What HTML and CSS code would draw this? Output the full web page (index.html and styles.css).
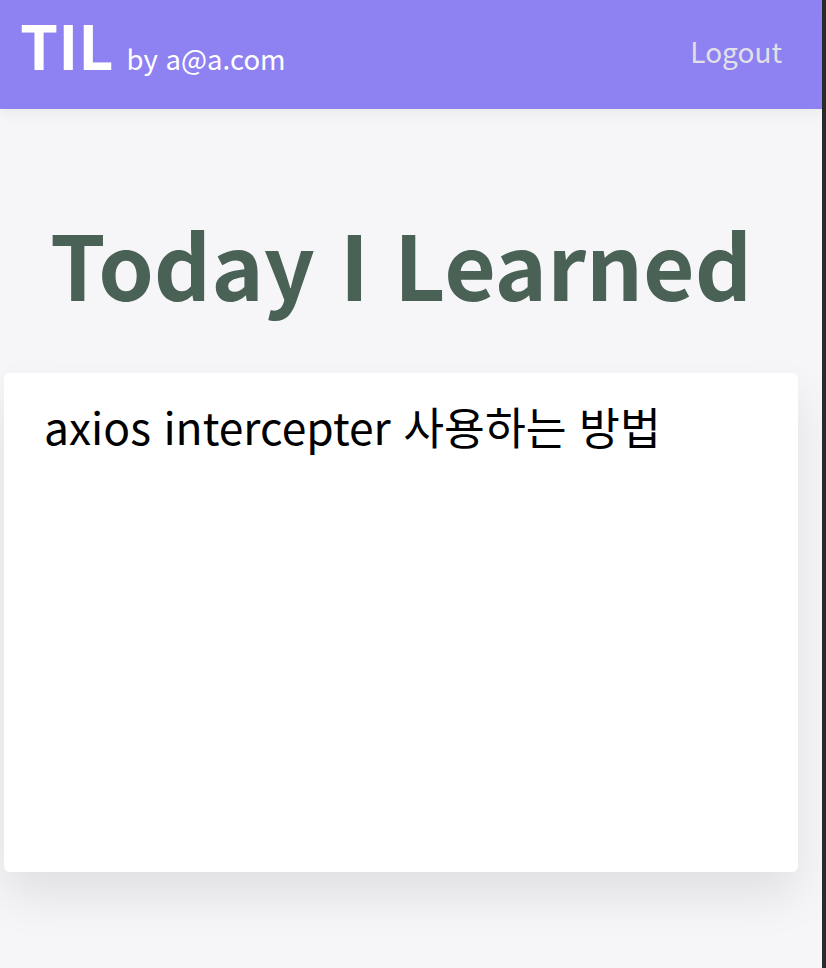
FILE: index.html
```html
<!DOCTYPE html>
<html lang="ko">
<head>
<meta charset="utf-8">
<title>TIL</title>
<link rel="stylesheet" href="styles.css">
</head>
<body>
<div class="app">
  <header class="header">
    <div class="brand">
      <span class="logo">TIL</span>
      <span class="user">by a@a.com</span>
    </div>
    <a class="logout" href="#">Logout</a>
  </header>
  <main class="main">
    <h1 class="title">Today I Learned</h1>
    <ul class="list">
      <li class="card">
        <div class="card-title">axios intercepter 사용하는 방법</div>
      </li>
    </ul>
  </main>
</div>
<div class="edge"></div>
</body>
</html>
```
FILE: styles.css
```css
html, body {
  margin: 0;
  padding: 0;
  height: 100%;
}
body {
  display: flex;
  background: #2a2a2c;
  font-family: "Noto Sans CJK KR", "Noto Sans", sans-serif;
  overflow: hidden;
}
.app {
  width: 822px;
  flex: none;
  background: #f6f6f9;
  min-height: 968px;
}
.edge {
  flex: 1;
  background: #2a2a2c;
}
.header {
  position: relative;
  z-index: 1;
  height: 109px;
  background: #8e82f3;
  display: flex;
  align-items: flex-start;
  justify-content: space-between;
  padding: 13px 40px 0 20px;
  box-sizing: border-box;
  box-shadow: 0 4px 14px rgba(0, 0, 0, 0.06);
}
.brand {
  display: flex;
  align-items: baseline;
  gap: 13px;
  color: #fff;
  line-height: 1;
}
.logo {
  font-size: 61px;
  font-weight: 700;
}
.user {
  font-size: 27.5px;
}
.logout {
  margin-top: 24px;
  color: #e0e0e6;
  text-decoration: none;
  font-size: 28px;
  line-height: 1;
}
.main {
  padding: 0 24px 0 4px;
}
.title {
  margin: 0 0 66px;
  padding-top: 109px;
  text-align: center;
  font-size: 89px;
  font-weight: 700;
  color: #4a6156;
  line-height: 1;
}
.list {
  list-style: none;
  margin: 0;
  padding: 0;
}
.card {
  background: #fff;
  border-radius: 6px;
  height: 499px;
  padding: 31px 40px;
  box-sizing: border-box;
  box-shadow: 0 24px 48px rgba(0, 0, 0, 0.09);
}
.card-title {
  font-size: 44.4px;
  color: #000;
  line-height: 1;
}
```
